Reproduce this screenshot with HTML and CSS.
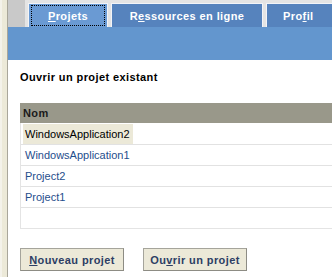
FILE: index.html
```html
<!DOCTYPE html>
<html lang="fr">
<head>
	<meta charset="UTF-8">
	<title>Page de démarrage</title>
	<link rel="stylesheet" href="styles.css">
</head>
<body>
	<div class="frame"></div>
	<div class="main">
		<div class="tabbar">
			<div class="tabgap"></div>
			<a href="javascript:;" class="tab tab1 active"><span class="focus"><u>P</u>rojets</span></a>
			<a href="javascript:;" class="tab tab2">R<u>e</u>ssources en ligne</a>
			<a href="javascript:;" class="tab tab3">Pro<u>f</u>il</a>
		</div>
		<div class="band"></div>
		<div class="content">
			<h2 class="title">Ouvrir un projet existant</h2>
			<div class="list">
				<div class="head">Nom</div>
				<div class="row"><span class="sel">WindowsApplication2</span></div>
				<div class="row"><a href="javascript:;">WindowsApplication1</a></div>
				<div class="row"><a href="javascript:;">Project2</a></div>
				<div class="row"><a href="javascript:;">Project1</a></div>
				<div class="row"></div>
			</div>
			<div class="buttons">
				<button class="btn"><u>N</u>ouveau projet</button>
				<button class="btn">Ou<u>v</u>rir un projet</button>
			</div>
		</div>
	</div>
</body>
</html>
```
FILE: styles.css
```css
body,h2,div,a{
	margin: 0;padding: 0;
}
body{
	width: 332px;
	height: 277px;
	overflow: hidden;
	display: flex;
	font-family: "Liberation Sans", Arial, sans-serif;
	font-size: 11px;
	background: #fff;
}
.frame{
	width: 5px;
	flex: none;
	background: #ece9d8;
	border-left: 2px solid #f4f2ea;
	border-right: 1px solid #a9a69a;
}
.main{
	flex: 1;
	display: flex;
	flex-direction: column;
	min-width: 0;
}
.tabbar{
	height: 27px;
	display: flex;
	align-items: flex-end;
	gap: 3px;
	background: #e4e4e4;
	white-space: nowrap;
}
.tabgap{
	width: 17px;
	height: 27px;
	background: #c9c9c9;
	flex: none;
}
.tab{
	height: 24px;
	box-sizing: border-box;
	border: 1px solid #f2f4f8;
	border-bottom: none;
	background: #5683bd;
	color: #fff;
	font-weight: bold;
	letter-spacing: 0.4px;
	text-decoration: none;
	display: flex;
	align-items: center;
	justify-content: center;
	flex: none;
}
.tab1{
	width: 80px;
	padding: 1px 2px 0;
	background: #6a9ad3;
}
.tab2{
	width: 152px;
}
.tab3{
	width: 70px;
	justify-content: flex-start;
	padding-left: 16px;
}
.focus{
	flex: 1;
	align-self: stretch;
	display: flex;
	align-items: center;
	justify-content: center;
	border: 1px dotted #000;
	margin-bottom: 1px;
}
.band{
	height: 33px;
	background: #6396ce;
}
.content{
	flex: 1;
	padding: 10px 0 0 12px;
}
.title{
	font-size: 11px;
	font-weight: bold;
	letter-spacing: 0.4px;
	color: #000;
	line-height: 14px;
}
.list{
	margin-top: 19px;
	border-left: 1px solid #e4e4e4;
	border-bottom: 1px solid #e4e4e4;
}
.head{
	height: 20px;
	line-height: 21px;
	background: #99988a;
	color: #1a1a1a;
	font-weight: bold;
	letter-spacing: 0.4px;
	padding-left: 3px;
	margin-left: -1px;
}
.row{
	height: 20px;
	border-top: 1px solid #e2e2e2;
	padding-left: 2px;
	line-height: 20px;
}
.row:nth-child(2){
	border-top: none;
	height: 21px;
	padding-top: 1px;
	box-sizing: border-box;
}
.row a{
	color: #1f4e8c;
	text-decoration: none;
	padding-left: 2px;
}
.sel{
	display: inline-block;
	background: #ece9d8;
	color: #000;
	padding: 0 4px 0 2px;
	width: 104px;
	line-height: 20px;
}
.buttons{
	display: flex;
	gap: 19px;
	margin-top: 19px;
}
.btn{
	width: 104px;
	height: 23px;
	background: #ece9d8;
	border: 1px solid #a5a49b;
	border-right-color: #8d8c84;
	border-bottom-color: #8d8c84;
	font-family: "Liberation Sans", Arial, sans-serif;
	font-size: 11px;
	font-weight: bold;
	letter-spacing: 0.4px;
	color: #2c3e64;
	padding: 0;
}
```
